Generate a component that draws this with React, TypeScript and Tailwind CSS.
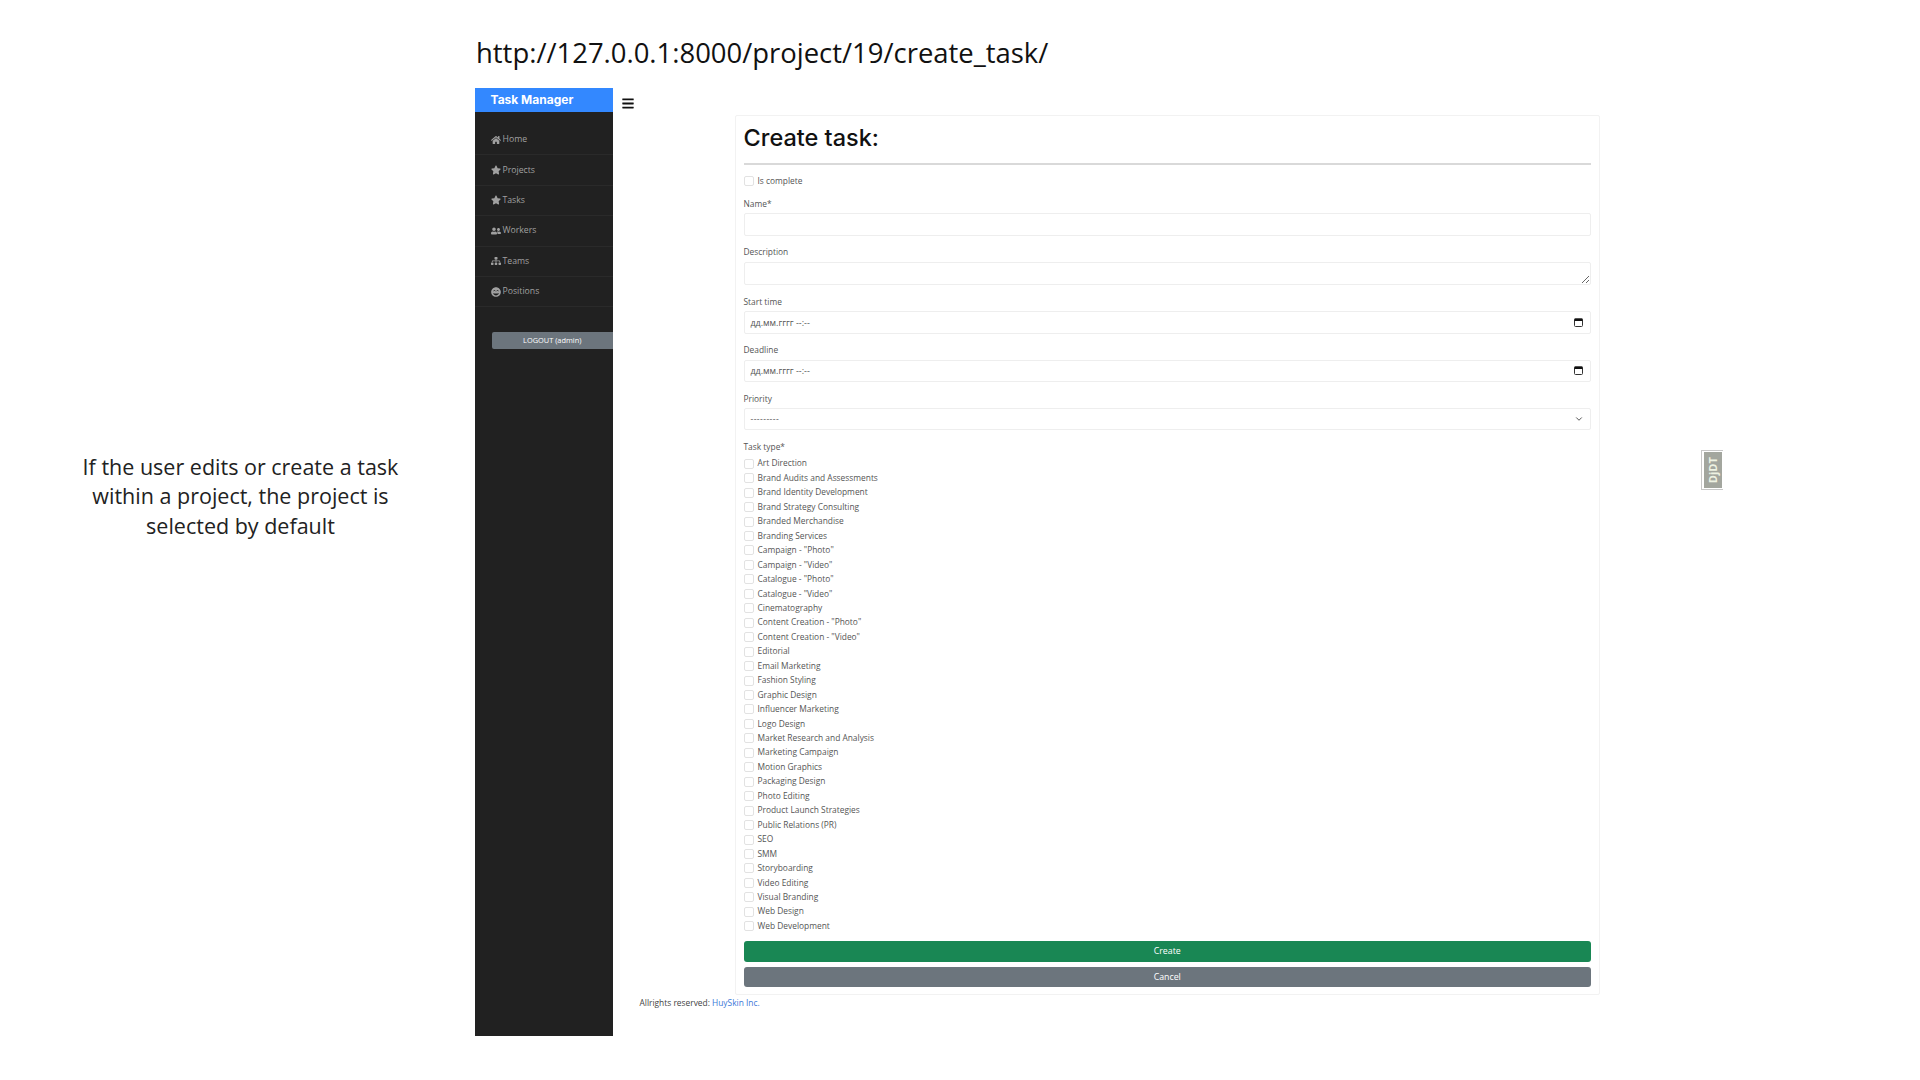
import { FaBars, FaHome, FaStar, FaUserFriends, FaSitemap, FaGrinBeam } from 'react-icons/fa';
import { ChevronDown } from 'lucide-react';

const navItems = [
  { label: 'Home', icon: FaHome },
  { label: 'Projects', icon: FaStar },
  { label: 'Tasks', icon: FaStar },
  { label: 'Workers', icon: FaUserFriends },
  { label: 'Teams', icon: FaSitemap },
  { label: 'Positions', icon: FaGrinBeam },
];

const taskTypes = [
  'Art Direction',
  'Brand Audits and Assessments',
  'Brand Identity Development',
  'Brand Strategy Consulting',
  'Branded Merchandise',
  'Branding Services',
  'Campaign - "Photo"',
  'Campaign - "Video"',
  'Catalogue - "Photo"',
  'Catalogue - "Video"',
  'Cinematography',
  'Content Creation - "Photo"',
  'Content Creation - "Video"',
  'Editorial',
  'Email Marketing',
  'Fashion Styling',
  'Graphic Design',
  'Influencer Marketing',
  'Logo Design',
  'Market Research and Analysis',
  'Marketing Campaign',
  'Motion Graphics',
  'Packaging Design',
  'Photo Editing',
  'Product Launch Strategies',
  'Public Relations (PR)',
  'SEO',
  'SMM',
  'Storyboarding',
  'Video Editing',
  'Visual Branding',
  'Web Design',
  'Web Development',
];

function Checkbox() {
  return <input type="checkbox" className="appearance-none block w-[10px] h-[10px] rounded-[2px] border border-[#e2e2e2] bg-white shrink-0" />;
}

function CalendarIcon() {
  return (
    <svg width="9" height="9" viewBox="0 0 9 9">
      <rect x="0.5" y="1" width="8" height="7.5" rx="1" fill="none" stroke="#333" />
      <rect x="0.5" y="0.5" width="8" height="2.5" fill="#111" />
    </svg>
  );
}

function Field({ label, children }: { label: string; children: React.ReactNode }) {
  return (
    <div className="mb-[9.5px]">
      <div className="h-[16.5px] leading-[13.5px] text-[8.4px] text-[#555]">{label}</div>
      {children}
    </div>
  );
}

function DateField({ label }: { label: string }) {
  return (
    <Field label={label}>
      <div className="h-[22.5px] border border-[#eeeeee] rounded-[2px] flex items-center justify-between pl-[6px] pr-[7px] text-[8.9px] text-[#555]">
        <span>дд.мм.гггг --:--</span>
        <CalendarIcon />
      </div>
    </Field>
  );
}

export default function App() {
  return (
    <div className="flex w-[1920px] h-[1080px] bg-white overflow-hidden font-['Open_Sans',sans-serif]">
      {/* Caption */}
      <div className="w-[474.5px] shrink-0 pl-[6.5px] pt-[452px] text-center text-[21.5px] leading-[29.4px] text-[#222]">
        <p>If the user edits or create a task</p>
        <p>within a project, the project is</p>
        <p>selected by default</p>
      </div>

      <div className="flex-1 flex flex-col relative">
        <div className="h-[88px] pl-[1.5px] pt-[32px] text-[27.45px] leading-[42px] text-[#111]">http://127.0.0.1:8000/project/19/create_task/</div>

        <div className="flex">
          {/* Sidebar */}
          <aside className="w-[138.5px] h-[948px] shrink-0 bg-[#212121]">
            <div className="h-[24px] bg-[#3388ff] pl-[16px] flex items-center text-[12px] font-bold text-white font-['Inter',sans-serif]">Task Manager</div>
            <nav className="pt-[13px]">
              {navItems.map((item) => (
                <div key={item.label} className="h-[30.4px] pl-[16px] flex items-center gap-[2px] border-b border-[#2a2a2a] text-[8.7px] text-[#a0a0a0]">
                  <item.icon className="w-[10px] h-[10px]" />
                  <span>{item.label}</span>
                </div>
              ))}
            </nav>
            <div className="mt-[24.5px] ml-[17px] h-[17px] bg-[#6c757d] rounded-l-[2px] flex items-center justify-center text-[7.4px] text-white">LOGOUT (admin)</div>
          </aside>

          {/* Main content */}
          <main className="flex-1 flex flex-col">
            <div className="h-[27px] pl-[8.5px] pt-[9px] text-[#111]">
              <FaBars className="w-[12px] h-[13px]" />
            </div>

            <div className="ml-[121.5px] w-[865.5px] h-[880px] border border-[#f2f2f2] rounded-[2px] px-[8px] pt-[7px]">
              <h1 className="h-[30px] leading-[29px] text-[23.5px] font-medium text-[#111] font-['Inter',sans-serif]">Create task:</h1>
              <div className="mt-[10px] h-[2px] bg-[#d9d9d9]" />

              <label className="mt-[9px] mb-[8.5px] h-[14px] flex items-center gap-[4px] text-[8.4px] text-[#555]">
                <Checkbox />
                Is complete
              </label>

              <Field label="Name*">
                <input className="block w-full h-[22.5px] border border-[#eeeeee] rounded-[2px]" />
              </Field>
              <Field label="Description">
                <textarea className="block w-full h-[23.5px] border border-[#eeeeee] rounded-[2px] resize-y" />
              </Field>
              <DateField label="Start time" />
              <DateField label="Deadline" />
              <Field label="Priority">
                <div className="h-[22px] border border-[#eeeeee] rounded-[2px] flex items-center justify-between pl-[6px] pr-[6px] text-[8.5px] tracking-[0.45px] text-[#555]">
                  <span>---------</span>
                  <ChevronDown className="w-[10px] h-[10px] text-[#333]" />
                </div>
              </Field>

              <div className="h-[17px] leading-[13.5px] text-[8.4px] text-[#555]">Task type*</div>
              <div className="flex flex-col">
                {taskTypes.map((t) => (
                  <label key={t} className="h-[14.46px] flex items-center gap-[4px] text-[8.4px] text-[#555]">
                    <Checkbox />
                    {t}
                  </label>
                ))}
              </div>

              <button className="block mt-[8px] w-full h-[20.5px] bg-[#198754] rounded-[3px] text-[8.8px] text-white">Create</button>
              <button className="block mt-[5px] w-full h-[20.5px] bg-[#6c757d] rounded-[3px] text-[8.8px] text-white">Cancel</button>
            </div>

            <div className="ml-[26.5px] mt-[2px] text-[8.4px] leading-[12px] text-[#444]">
              Allrights reserved: <span className="text-[#3b78d8]">HuySkin Inc.</span>
            </div>
          </main>
        </div>

        {/* DjDT toolbar handle */}
        <div className="absolute left-[1226.5px] top-[450px] w-[22px] h-[40px] border border-[#c8c8c8] border-r-0 flex items-center justify-center">
          <div className="w-[18px] h-[36px] bg-[#a3a69e] flex items-center justify-center">
            <span className="-rotate-90 text-[11px] font-bold text-[#eef2e2] whitespace-nowrap">DjDT</span>
          </div>
        </div>
      </div>
    </div>
  );
}
